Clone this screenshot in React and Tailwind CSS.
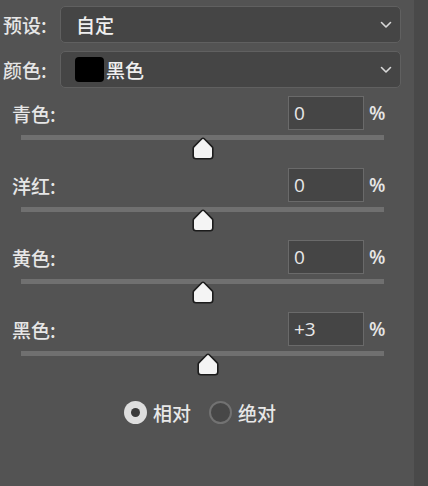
import React from 'react';

const CJK = "font-['Noto_Sans_CJK_SC','Noto_Sans',sans-serif] font-medium";

const SLIDERS = [
  { label: '青色:', value: 0 },
  { label: '洋红:', value: 0 },
  { label: '黄色:', value: 0 },
  { label: '黑色:', value: 3 },
];

const TRACK_W = 363;

function Chevron() {
  return (
    <svg width="12" height="8" viewBox="0 0 12 8" className="shrink-0">
      <path d="M1.5 1.5 L6 6 L10.5 1.5" fill="none" stroke="#d8d8d8" strokeWidth="1.6" strokeLinecap="round" strokeLinejoin="round" />
    </svg>
  );
}

function Thumb() {
  return (
    <svg width="22" height="23" viewBox="0 0 22 23">
      <path
        d="M11 1.2 Q11.6 1.2 12.2 1.8 L20 9.6 Q20.8 10.4 20.8 11.4 V19 Q20.8 21.8 18 21.8 H4 Q1.2 21.8 1.2 19 V11.4 Q1.2 10.4 2 9.6 L9.8 1.8 Q10.4 1.2 11 1.2 Z"
        fill="#f4f4f4"
        stroke="#1c1c1c"
        strokeWidth="1.6"
      />
    </svg>
  );
}

function Select({ children }) {
  return (
    <div className="flex h-[37px] w-[341px] items-center justify-between rounded-[5px] border border-[#606060] bg-[#454545] pl-[14px] pr-[8px]">
      <div className="flex items-center">{children}</div>
      <Chevron />
    </div>
  );
}

function SliderBlock({ label, value }) {
  const center = ((value + 100) / 200) * TRACK_W;
  const text = value > 0 ? `+${value}` : `${value}`;
  return (
    <div className="flex h-[72px] flex-col">
      <div className="flex h-[34px] items-center">
        <span className={`ml-[12px] text-[19px] leading-none text-[#e6e6e6] ${CJK}`}>{label}</span>
        <div className="ml-auto flex h-[34px] w-[76px] items-center border border-[#6a6a6a] bg-[#454545] pl-[5px]">
          <span className="font-['Open_Sans',sans-serif] text-[19px] leading-none text-[#e8e8e8]">{text}</span>
        </div>
        <span className="ml-[5px] mr-[28px] w-[17px] font-['Open_Sans',sans-serif] text-[19px] font-semibold leading-none text-[#e6e6e6]">%</span>
      </div>
      <div className="relative ml-[21px] mt-[5px] h-[5px] w-[363px] bg-[#707070]">
        <div className="absolute top-[2px]" style={{ left: center - 11 }}>
          <Thumb />
        </div>
      </div>
    </div>
  );
}

function Radio({ checked, label }) {
  return (
    <div className="flex items-center gap-[6px]">
      {checked ? (
        <div className="flex h-[23px] w-[23px] items-center justify-center rounded-full bg-[#dedede]">
          <div className="h-[9px] w-[9px] rounded-full bg-[#3a3a3a]" />
        </div>
      ) : (
        <div className="h-[23px] w-[23px] rounded-full border-2 border-[#727272] bg-[#474747]" />
      )}
      <span className={`text-[19px] leading-none text-[#e8e8e8] ${CJK}`}>{label}</span>
    </div>
  );
}

export default function App() {
  return (
    <div className="flex h-[486px] w-[428px] bg-[#535353]">
      <div className="flex w-[414px] flex-col pt-[6px]">
        <div className="flex items-center">
          <span className={`ml-[3px] w-[57px] text-[19px] leading-none text-[#e6e6e6] ${CJK}`}>预设:</span>
          <Select>
            <span className={`ml-[1px] text-[19px] leading-none text-[#efefef] ${CJK}`}>自定</span>
          </Select>
        </div>
        <div className="mt-[8px] flex items-center">
          <span className={`ml-[3px] w-[57px] text-[19px] leading-none text-[#e6e6e6] ${CJK}`}>颜色:</span>
          <Select>
            <div className="h-[25px] w-[29px] rounded-[4px] bg-black" />
            <span className={`ml-[2px] text-[19px] leading-none text-[#efefef] ${CJK}`}>黑色</span>
          </Select>
        </div>
        <div className="mt-[8px] flex flex-col">
          {SLIDERS.map((s) => (
            <SliderBlock key={s.label} label={s.label} value={s.value} />
          ))}
        </div>
        <div className="mt-[17px] flex items-center gap-[18px] pl-[124px]">
          <Radio checked label="相对" />
          <Radio label="绝对" />
        </div>
      </div>
      <div className="w-[14px] bg-[#494949]" />
    </div>
  );
}
